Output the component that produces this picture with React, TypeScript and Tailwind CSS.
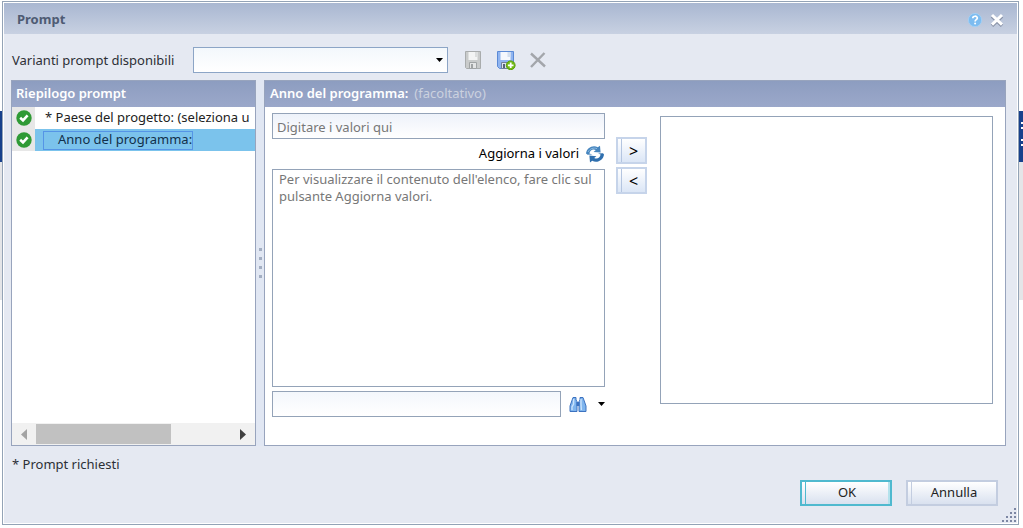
import React from "react";

const CheckIcon = () => (
  <svg width="16" height="16" viewBox="0 0 16 16" fill="none" aria-hidden="true">
    <circle cx="8" cy="8" r="7.7" fill="#2f9a35" />
    <path d="M4.2 7.8L7 10.4L11.6 5.4" stroke="white" strokeWidth="2.6" />
  </svg>
);

const SaveIcon = () => (
  <svg width="20" height="20" viewBox="0 0 20 20" fill="none" aria-hidden="true">
    <path d="M2.5 1.5H17.5V18.5H3.5L2.5 17.5Z" fill="#c9cbcb" stroke="#a9acad" />
    <path d="M5.5 2H14.5V10H5.5Z" fill="#f3f4f4" />
    <path d="M12 2H14.5V7H12Z" fill="#dcdede" />
    <path d="M6.5 12.5H13.5V18.5H6.5Z" fill="#e4e5e5" stroke="#a1a4a5" />
    <path d="M8 14H10V18H8Z" fill="#a0a3a4" />
  </svg>
);

const SaveAsIcon = () => (
  <svg width="20" height="20" viewBox="0 0 20 20" fill="none" aria-hidden="true">
    <path d="M1.5 1.5H17.5V18.5H3.5L1.5 16.5Z" fill="#8fb4f0" stroke="#5b8ad6" />
    <path d="M4.5 2H14.5V10H4.5Z" fill="#f5f8fd" />
    <path d="M11.5 2H14.5V7H11.5Z" fill="#d3dfef" />
    <path d="M5.5 12.5H13.5V18.5H5.5Z" fill="#dfe5ee" stroke="#71809a" />
    <path d="M7 14H9V18H7Z" fill="#55627a" />
    <circle cx="14.7" cy="15.3" r="4.4" fill="#72bb12" stroke="#5ba00d" />
    <path d="M14.7 12.5V18.1M11.9 15.3H17.5" stroke="white" strokeWidth="1.8" />
  </svg>
);

const DeleteIcon = () => (
  <svg width="18" height="18" viewBox="0 0 18 18" fill="none" aria-hidden="true">
    <path d="M2 2.5L16 15.5M15.5 2L2 16" stroke="#a3a6ab" strokeWidth="2.4" />
  </svg>
);

const HelpIcon = () => (
  <svg width="14" height="14" viewBox="0 0 14 14" fill="none" aria-hidden="true">
    <circle cx="7" cy="7" r="6.6" fill="#7dbcf0" stroke="#a2d2f7" strokeWidth="0.8" />
    <path
      d="M4.8 5.2C4.8 2.6 9.3 2.6 9.3 5C9.3 6.6 7.1 6.6 7.1 8.4"
      stroke="white"
      strokeWidth="1.7"
    />
    <circle cx="7.1" cy="10.5" r="1" fill="white" />
  </svg>
);

const CloseIcon = () => (
  <svg width="14" height="14" viewBox="0 0 14 14" fill="none" aria-hidden="true">
    <path d="M2 3.2L12 12.8M12 3.2L2 12.8" stroke="#8791a6" strokeWidth="3.4" />
    <path d="M2 2L12 11.6M12 2L2 11.6" stroke="white" strokeWidth="3" />
  </svg>
);

const RefreshIcon = () => (
  <svg width="20" height="18" viewBox="0 0 20 18" fill="none" aria-hidden="true">
    <path
      d="M1 8.6C1.6 3 7.6-.4 12.8 2.2L15 .8L15.6 7.6L8.6 7L10.8 5C8 3.6 5 5 4.4 8.6L7.4 9.6L2.6 9.8Z"
      fill="#4685be"
    />
    <path
      d="M19 9.4C18.4 15 12.4 18.4 7.2 15.8L5 17.4L4.4 10.6L11.4 11.2L9.2 13C12 14.4 15 13 15.6 9.6L13 8.6L18 8.2Z"
      fill="#2f6fae"
    />
    <path d="M3 7C5 3.4 8.6 2.4 12 3.6" stroke="#8bbbe2" strokeWidth="1" />
  </svg>
);

const BinocularsIcon = () => (
  <svg width="18" height="17" viewBox="0 0 18 17" fill="none" aria-hidden="true">
    <path
      d="M4 1.5H7V4L8 5.5V15.5H1V10Z"
      fill="#7fb5ee"
      stroke="#3c72c0"
      strokeLinejoin="round"
    />
    <path
      d="M14 1.5H11V4L10 5.5V15.5H17V10Z"
      fill="#7fb5ee"
      stroke="#3c72c0"
      strokeLinejoin="round"
    />
    <path d="M7.5 6H10.5V10H7.5Z" fill="#3c72c0" />
    <path d="M4.6 3V8L3 11V14M12 3V8L12.4 14" stroke="#c9e2fb" strokeWidth="1.4" />
  </svg>
);

const CaretIcon = () => (
  <svg width="7" height="4" viewBox="0 0 7 4" aria-hidden="true">
    <path d="M0 0H7L3.5 4Z" fill="black" />
  </svg>
);

const ResizeGrip = () => (
  <svg width="15" height="15" viewBox="0 0 15 15" fill="#7c86a3" aria-hidden="true">
    <path d="M12 0h2v2h-2zM12 4h2v2h-2zM8 4h2v2h-2zM12 8h2v2h-2zM8 8h2v2h-2zM4 8h2v2h-2zM12 12h2v2h-2zM8 12h2v2h-2zM4 12h2v2h-2zM0 12h2v2h-2z" />
  </svg>
);

const prompts = [
  { label: "* Paese del progetto: (seleziona u", selected: false },
  { label: "Anno del programma:", selected: true },
];

const PromptSummary = () => {
  return (
    <section className="w-[245px] shrink-0 flex flex-col bg-white border border-[#98a4bd]">
      <h2 className="h-[26px] px-1 flex items-center bg-linear-to-b from-[#8d9dc0] to-[#9ba8ca] text-white font-semibold">
        Riepilogo prompt
      </h2>
      <ul className="flex-1">
        {prompts.map((prompt) => (
          <li key={prompt.label} className="h-[22px] flex">
            <span className="w-[23px] shrink-0 grid place-items-center bg-[#e7e7e7]">
              <CheckIcon />
            </span>
            <button
              type="button"
              className={
                prompt.selected
                  ? "flex-1 min-w-0 flex items-center pl-2 bg-[#7bc3ec] text-[#12304a]"
                  : "flex-1 min-w-0 flex items-center pl-[10px] text-[#222222] overflow-hidden"
              }
            >
              <span
                className={
                  prompt.selected
                    ? "h-[19px] pl-[14px] flex items-center border border-[#5595e6] whitespace-nowrap"
                    : "whitespace-nowrap"
                }
              >
                {prompt.label}
              </span>
            </button>
          </li>
        ))}
      </ul>
      <div className="h-[22px] flex items-center bg-[#f1f1f1]">
        <button type="button" aria-label="Scorri a sinistra" className="w-6 h-full grid place-items-center">
          <svg width="6" height="11" viewBox="0 0 6 11">
            <path d="M6 0V11L0 5.5Z" fill="#a3a3a3" />
          </svg>
        </button>
        <div className="flex-1 h-5">
          <div className="w-[69%] h-full bg-[#c1c1c1]" />
        </div>
        <button type="button" aria-label="Scorri a destra" className="w-6 h-full grid place-items-center">
          <svg width="6" height="11" viewBox="0 0 6 11">
            <path d="M0 0V11L6 5.5Z" fill="#404040" />
          </svg>
        </button>
      </div>
    </section>
  );
};

const MoveButton = ({ label, children }: { label: string; children: React.ReactNode }) => (
  <button
    type="button"
    aria-label={label}
    className="w-[31px] h-[27px] flex border-2 border-[#c6d4ea] bg-linear-to-b from-white to-[#dbe6f6] text-black text-base"
  >
    <span className="w-1 h-full border-r border-[#b4c5e0]" />
    <span className="flex-1 h-full grid place-items-center leading-5">{children}</span>
  </button>
);

const PromptValues = () => {
  return (
    <section className="flex-1 min-w-0 flex flex-col bg-white border border-[#98a4bd]">
      <h2 className="h-[26px] px-[5px] flex items-center gap-[6px] bg-linear-to-b from-[#8d9dc0] to-[#9ba8ca] text-white font-semibold">
        Anno del programma:
        <span className="font-normal text-[#cbd1df]">(facoltativo)</span>
      </h2>
      <div className="flex-1 flex pl-[7px] pr-3">
        <div className="flex-1 min-w-0 flex flex-col pt-[6px] pb-7">
          <input
            type="text"
            aria-label="Valore"
            placeholder="Digitare i valori qui"
            className="w-full h-[26px] px-1 pt-[2px] border border-[#94a3b8] bg-linear-to-b from-[#eef2fa] to-white placeholder:text-[#777777] outline-none"
          />
          <div className="h-[30px] flex justify-end items-center">
            <button type="button" className="flex items-center gap-[6px] text-black">
              Aggiorna i valori
              <RefreshIcon />
            </button>
          </div>
          <div className="flex-1 px-[6px] pt-[1px] leading-[17px] border border-[#94a3b8] text-[#777777]">
            Per visualizzare il contenuto dell'elenco, fare clic sul pulsante Aggiorna valori.
          </div>
          <div className="mt-1 flex items-center">
            <input
              type="text"
              aria-label="Cerca"
              className="flex-1 min-w-0 h-[26px] px-1 border border-[#94a3b8] bg-linear-to-b from-[#f3f7fc] to-white outline-none"
            />
            <button type="button" aria-label="Trova" className="ml-2 mr-[11px]">
              <BinocularsIcon />
            </button>
            <button type="button" aria-label="Opzioni di ricerca">
              <CaretIcon />
            </button>
          </div>
        </div>
        <div className="flex flex-col gap-[3px] pl-[11px] pr-[13px] pt-[30px]">
          <MoveButton label="Aggiungi">&gt;</MoveButton>
          <MoveButton label="Rimuovi">&lt;</MoveButton>
        </div>
        <div className="flex-1 min-w-0 flex pt-[9px] pb-[41px]">
          <div className="flex-1 border border-[#94a3b8]" />
        </div>
      </div>
    </section>
  );
};

const Toolbar = () => {
  return (
    <div className="flex items-center pl-2 pt-[13px] pb-[7px] text-[#2c2f36]">
      <label htmlFor="variant" className="w-[181px] pt-[2px]">
        Varianti prompt disponibili
      </label>
      <div className="relative w-[255px] h-[26px]">
        <select
          id="variant"
          className="w-full h-full appearance-none border border-[#8ca5c6] bg-linear-to-b from-[#f3f8fc] to-white outline-none"
        />
        <span className="absolute right-[5px] top-[11px] pointer-events-none">
          <CaretIcon />
        </span>
      </div>
      <div className="ml-[15px] flex items-center gap-[13px]">
        <button type="button" aria-label="Salva">
          <SaveIcon />
        </button>
        <button type="button" aria-label="Salva con nome">
          <SaveAsIcon />
        </button>
        <button type="button" aria-label="Elimina">
          <DeleteIcon />
        </button>
      </div>
    </div>
  );
};

const Footer = () => {
  return (
    <footer className="pl-2 pt-2 text-[#2c2f36]">
      <p className="leading-5">* Prompt richiesti</p>
      <div className="flex justify-end items-end pt-[6px]">
        <div className="flex gap-[14px] pb-[17px] pr-1">
          <button
            type="button"
            className="w-[92px] h-[26px] flex border-2 border-[#4fb9cf] bg-linear-to-b from-white to-[#d9e1ef] text-[#222222]"
          >
            <span className="w-1 h-full border-r border-[#4fb9cf]" />
            <span className="flex-1 h-full grid place-items-center">OK</span>
            <span className="w-[2px] h-full bg-[#b4e2ec]" />
          </button>
          <button
            type="button"
            className="w-[92px] h-[26px] flex border-2 border-[#c3cde0] bg-linear-to-b from-white to-[#d9e1ef] text-[#222222]"
          >
            <span className="w-1 h-full border-r border-[#c3cde0]" />
            <span className="flex-1 h-full grid place-items-center">Annulla</span>
          </button>
        </div>
        <ResizeGrip />
      </div>
    </footer>
  );
};

const Backdrop = () => {
  return (
    <div className="absolute inset-0 pt-[111px] overflow-hidden" aria-hidden="true">
      <div className="h-[51px] pt-[11px] flex flex-col items-end gap-[10px] bg-[#17418c]">
        <span className="w-[2px] h-[7px] border-y-2 border-white" />
        <span className="w-[2px] h-[7px] border-y-2 border-white" />
      </div>
      <div className="h-[138px] bg-[#e4e5e8]" />
    </div>
  );
};

const App = () => {
  return (
    <main className="relative min-h-screen flex flex-col bg-white pt-[1px] pl-[2px] pr-1 pb-[3px] font-['Noto_Sans','Open_Sans',sans-serif] text-[13px]">
      <Backdrop />
      <div
        role="dialog"
        aria-labelledby="title"
        className="relative flex-1 flex flex-col p-[1px] border border-[#93a3b6] bg-white"
      >
        <div className="flex-1 flex flex-col bg-[#e5e9f2]">
          <header className="h-[31px] px-[13px] pt-[2px] flex items-center justify-between bg-linear-to-b from-[#a9b7d1] to-[#c8d1e2]">
            <h1 id="title" className="font-bold text-[#4e5b73]">
              Prompt
            </h1>
            <div className="flex items-center gap-2">
              <button type="button" aria-label="Guida">
                <HelpIcon />
              </button>
              <button type="button" aria-label="Chiudi">
                <CloseIcon />
              </button>
            </div>
          </header>
          <Toolbar />
          <div className="flex-1 flex pl-[7px] pr-[11px]">
            <PromptSummary />
            <div className="w-2 shrink-0 flex flex-col items-center justify-center gap-[6px] bg-[#e1e7f3] cursor-col-resize">
              <span className="w-[3px] h-[3px] bg-[#a3aec2]" />
              <span className="w-[3px] h-[3px] bg-[#a3aec2]" />
              <span className="w-[3px] h-[3px] bg-[#a3aec2]" />
              <span className="w-[3px] h-[3px] bg-[#a3aec2]" />
            </div>
            <PromptValues />
          </div>
          <Footer />
        </div>
      </div>
    </main>
  );
};

export default App;
